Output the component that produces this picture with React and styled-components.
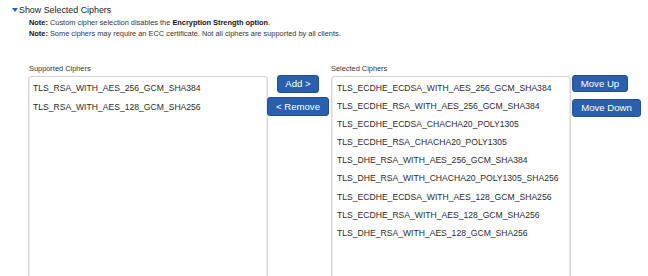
import React from "react";
import styled, { createGlobalStyle } from "styled-components";

const Global = createGlobalStyle`
  html, body { margin: 0; padding: 0; background: #fff; }
  body { font-family: "Liberation Sans", Arial, Helvetica, sans-serif; color: #222; }
`;

const Page = styled.div`
  width: 648px;
  height: 276px;
  overflow: hidden;
  padding-top: 3px;
  box-sizing: border-box;
`;

const Toggle = styled.div`
  display: flex;
  align-items: center;
  margin-left: 12px;
  height: 13px;
  font-size: 8.9px;
  color: #222;
`;

const Arrow = styled.span`
  display: inline-block;
  width: 0;
  height: 0;
  border-left: 3px solid transparent;
  border-right: 3px solid transparent;
  border-top: 4px solid #2a5fae;
  margin-right: 1px;
  margin-top: 1px;
`;

const Notes = styled.div`
  margin-left: 29px;
  margin-top: 2px;
  font-size: 7.4px;
  line-height: 10.5px;
  color: #333;
  b { color: #111; }
`;

const Lists = styled.div`
  display: grid;
  grid-template-columns: 239px 62px 242px auto;
  grid-template-rows: 12px auto;
  margin-top: 25px;
  margin-left: 28px;
`;

const Label = styled.div`
  grid-row: 1;
  grid-column: ${(p) => p.$col};
  margin-left: ${(p) => p.$offset}px;
  font-size: 7.4px;
  line-height: 10px;
  color: #333;
`;

const Box = styled.div`
  grid-row: 2;
  grid-column: ${(p) => p.$col};
  margin-left: ${(p) => p.$offset}px;
  width: 240px;
  height: 210px;
  box-sizing: border-box;
  border: 1px solid #d6d6d6;
  border-radius: 3px;
  box-shadow: inset 1px 0 0 #ececec, inset -1px 0 0 #ececec;
  padding: 1.5px 0 0 ${(p) => p.$pad}px;
  background: #fff;
`;

const Item = styled.div`
  height: ${(p) => p.$row}px;
  line-height: ${(p) => p.$row}px;
  font-size: 8.6px;
  color: #2b2b2b;
  white-space: nowrap;
`;

const ButtonCol = styled.div`
  grid-row: 2;
  grid-column: ${(p) => p.$col};
  margin-left: ${(p) => p.$offset}px;
  margin-top: -1px;
  display: flex;
  flex-direction: column;
  align-items: ${(p) => p.$align};
  gap: ${(p) => p.$gap}px;
  position: relative;
  z-index: 1;
`;

const Button = styled.button`
  appearance: none;
  width: ${(p) => p.$w}px;
  height: ${(p) => p.$h}px;
  padding: 0;
  background: #2a5fae;
  border: 1px solid #214f96;
  border-radius: 3px;
  color: #fff;
  font-family: "Liberation Sans", Arial, Helvetica, sans-serif;
  font-size: 9.6px;
  line-height: 1;
  display: flex;
  align-items: center;
  justify-content: center;
  cursor: pointer;
`;

const supported = [
  "TLS_RSA_WITH_AES_256_GCM_SHA384",
  "TLS_RSA_WITH_AES_128_GCM_SHA256",
];

const selected = [
  "TLS_ECDHE_ECDSA_WITH_AES_256_GCM_SHA384",
  "TLS_ECDHE_RSA_WITH_AES_256_GCM_SHA384",
  "TLS_ECDHE_ECDSA_CHACHA20_POLY1305",
  "TLS_ECDHE_RSA_CHACHA20_POLY1305",
  "TLS_DHE_RSA_WITH_AES_256_GCM_SHA384",
  "TLS_DHE_RSA_WITH_CHACHA20_POLY1305_SHA256",
  "TLS_ECDHE_ECDSA_WITH_AES_128_GCM_SHA256",
  "TLS_ECDHE_RSA_WITH_AES_128_GCM_SHA256",
  "TLS_DHE_RSA_WITH_AES_128_GCM_SHA256",
];

export default function App() {
  return (
    <Page>
      <Global />
      <Toggle>
        <Arrow />
        Show Selected Ciphers
      </Toggle>
      <Notes>
        <div>
          <b>Note:</b> Custom cipher selection disables the <b>Encryption Strength option</b>.
        </div>
        <div>
          <b>Note:</b> Some ciphers may require an ECC certificate. Not all ciphers are supported by all clients.
        </div>
      </Notes>
      <Lists>
        <Label $col={1} $offset={1}>Supported Ciphers</Label>
        <Label $col={3} $offset={2}>Selected Ciphers</Label>
        <Box $col={1} $offset={0} $pad={4}>
          {supported.map((s) => (
            <Item key={s} $row={19}>{s}</Item>
          ))}
        </Box>
        <ButtonCol $col={2} $offset={0} $align="center" $gap={4}>
          <Button $w={42} $h={18}>Add &gt;</Button>
          <Button $w={62} $h={19}>&lt; Remove</Button>
        </ButtonCol>
        <Box $col={3} $offset={2} $pad={5}>
          {selected.map((s) => (
            <Item key={s} $row={18.2}>{s}</Item>
          ))}
        </Box>
        <ButtonCol $col={4} $offset={1} $align="flex-start" $gap={7}>
          <Button $w={56} $h={17}>Move Up</Button>
          <Button $w={69} $h={18}>Move Down</Button>
        </ButtonCol>
      </Lists>
    </Page>
  );
}
